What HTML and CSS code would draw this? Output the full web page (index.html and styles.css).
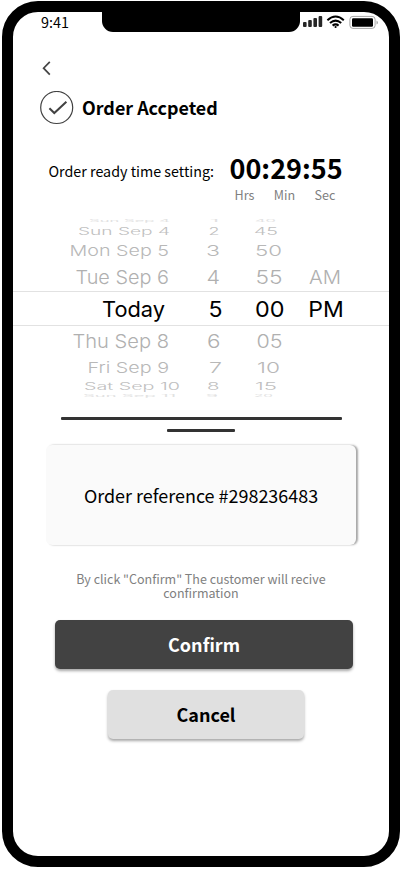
FILE: index.html
```html
<!DOCTYPE html>
<html lang="en">
<head>
<meta charset="utf-8">
<title>Order accepted</title>
<link rel="stylesheet" href="styles.css">
</head>
<body>
<main class="phone">
  <div class="notch"></div>
  <header class="status">
    <span class="clock">9:41</span>
    <svg class="indicators" width="78" height="16" viewBox="302 14 78 16">
      <g fill="#262626">
        <rect x="303" y="22" width="3.6" height="5" rx="1"/>
        <rect x="308.2" y="20" width="3.6" height="7" rx="1"/>
        <rect x="313.4" y="18" width="3.6" height="9" rx="1"/>
        <rect x="318.6" y="16" width="3.6" height="11" rx="1"/>
      </g>
      <g fill="none" stroke="#000" stroke-width="2">
        <path d="M327.4 20.2Q335.6 12.8 343.8 20.2"/>
        <path d="M330 23.1Q335.6 18.2 341.2 23.1"/>
        <path d="M332.6 25.6Q335.6 23.2 338.6 25.6"/>
      </g>
      <circle cx="335.6" cy="27" r="1.1"/>
      <rect x="349.9" y="16.4" width="25.2" height="12" rx="3" fill="none" stroke="#a6a6a6"/>
      <rect x="352" y="18.2" width="21" height="8.6" rx="1.2"/>
      <path d="M376.5 20.4Q378 21.2 378 22.5T376.5 24.6Z" fill="#a6a6a6"/>
    </svg>
  </header>
  <svg class="back" width="12" height="16" viewBox="40 60 12 16" fill="none" stroke="#444" stroke-width="1.7"><path d="M49.8 61.8L43.6 68.2L49.8 74.6"/></svg>
  <div class="title">
    <svg width="34" height="34" viewBox="0 0 34 34" fill="none" stroke="#424242">
      <circle cx="16.7" cy="16.5" r="16" stroke-width="1.2"/>
      <path d="M9.4 17.2L14.3 22L26.4 10.7" stroke-width="2"/>
    </svg>
    <h1>Order Accpeted</h1>
  </div>
  <section class="timer">
    <p class="label">Order ready time setting:</p>
    <div class="count">
      <strong>00:29:55</strong>
      <div class="units"><span>Hrs</span><span>Min</span><span>Sec</span></div>
    </div>
  </section>
  <svg class="picker" width="376" height="180" viewBox="13 218 376 180">
    <path class="rule" d="M13 291.5H389M13 325.5H389"/>
    <g class="edge">
      <text x="89" y="222" textLength="81" lengthAdjust="spacingAndGlyphs">Sun Sep 4</text>
      <text x="210" y="222" textLength="9" lengthAdjust="spacingAndGlyphs">1</text>
      <text x="255" y="222" textLength="21" lengthAdjust="spacingAndGlyphs">40</text>
      <text x="83" y="397" textLength="93" lengthAdjust="spacingAndGlyphs">Sun Sep 11</text>
      <text x="206" y="397" textLength="12" lengthAdjust="spacingAndGlyphs">9</text>
      <text x="254" y="397" textLength="19" lengthAdjust="spacingAndGlyphs">20</text>
    </g>
    <g class="far">
      <text x="78" y="234.5" textLength="92" lengthAdjust="spacingAndGlyphs">Sun Sep 4</text>
      <text x="208.5" y="234.5" textLength="11" lengthAdjust="spacingAndGlyphs">2</text>
      <text x="254" y="234.5" textLength="24" lengthAdjust="spacingAndGlyphs">45</text>
      <text x="84" y="390.4" textLength="96" lengthAdjust="spacingAndGlyphs">Sat Sep 10</text>
      <text x="207" y="390.4" textLength="12.5" lengthAdjust="spacingAndGlyphs">8</text>
      <text x="255" y="390.4" textLength="22" lengthAdjust="spacingAndGlyphs">15</text>
    </g>
    <g class="mid">
      <text x="69.5" y="255.8" textLength="99.5" lengthAdjust="spacingAndGlyphs">Mon Sep 5</text>
      <text x="206" y="255.8" textLength="14" lengthAdjust="spacingAndGlyphs">3</text>
      <text x="255" y="255.8" textLength="27" lengthAdjust="spacingAndGlyphs">50</text>
      <text x="87.5" y="373.2" textLength="81.5" lengthAdjust="spacingAndGlyphs">Fri Sep 9</text>
      <text x="209" y="373.2" textLength="13" lengthAdjust="spacingAndGlyphs">7</text>
      <text x="257" y="373.2" textLength="23" lengthAdjust="spacingAndGlyphs">10</text>
    </g>
    <g class="near">
      <text x="75.5" y="284.4" textLength="93.5" lengthAdjust="spacingAndGlyphs">Tue Sep 6</text>
      <text x="206.5" y="284.4" textLength="13.5" lengthAdjust="spacingAndGlyphs">4</text>
      <text x="255.5" y="284.4" textLength="27" lengthAdjust="spacingAndGlyphs">55</text>
      <text x="309" y="284.4" textLength="32" lengthAdjust="spacingAndGlyphs">AM</text>
      <text x="72.5" y="347.5" textLength="96.5" lengthAdjust="spacingAndGlyphs">Thu Sep 8</text>
      <text x="207" y="347.5" textLength="13.5" lengthAdjust="spacingAndGlyphs">6</text>
      <text x="256.5" y="347.5" textLength="26" lengthAdjust="spacingAndGlyphs">05</text>
    </g>
    <g class="chosen">
      <text x="102" y="317" textLength="63" lengthAdjust="spacingAndGlyphs">Today</text>
      <text x="208.5" y="317" textLength="14" lengthAdjust="spacingAndGlyphs">5</text>
      <text x="255" y="317" textLength="29.5" lengthAdjust="spacingAndGlyphs">00</text>
      <text x="308.3" y="317" textLength="35.5" lengthAdjust="spacingAndGlyphs">PM</text>
    </g>
  </svg>
  <div class="bar long"></div>
  <div class="bar short"></div>
  <section class="card">Order reference #298236483</section>
  <p class="note">By click "Confirm" The customer will recive confirmation</p>
  <button class="btn confirm">Confirm</button>
  <button class="btn cancel">Cancel</button>
</main>
</body>
</html>
```
FILE: styles.css
```css
* { box-sizing: border-box; }
body {
  margin: 0;
  padding: 1px 0 0 2px;
  width: 400px;
  height: 869px;
  overflow: hidden;
  background: #fff;
  color: #000;
  font-family: "Noto Sans CJK SC", sans-serif;
}
h1, p { margin: 0; }
svg { display: block; flex: none; }
.phone {
  position: relative;
  width: 398px;
  height: 866px;
  border: 11px solid #000;
  border-radius: 36px;
  display: flex;
  flex-direction: column;
  background: #fff;
}
.notch {
  position: absolute;
  top: -1px;
  left: 89px;
  width: 198px;
  height: 21px;
  border-radius: 0 0 11px 11px;
  background: #000;
}
.status {
  display: flex;
  justify-content: space-between;
  height: 22px;
  padding: 2px 9px 0 28px;
}
.clock { font-size: 14.4px; line-height: 16px; }
.back { margin: 26px 0 0 27px; }
.title {
  display: flex;
  align-items: flex-start;
  height: 34px;
  margin: 15px 0 0 27px;
  gap: 8px;
}
h1 { padding-top: 3px; font-size: 17.9px; line-height: 26px; font-weight: 700; }
.timer {
  display: flex;
  height: 53px;
  margin-top: 26px;
  padding-left: 35.5px;
}
.label { width: 181px; padding-top: 9px; font-size: 14.3px; line-height: 22px; white-space: nowrap; }
.count { width: 113px; }
.count strong { display: block; font-size: 27px; line-height: 34px; white-space: nowrap; }
.units {
  display: flex;
  justify-content: space-between;
  padding: 0 7px 0 5px;
  color: #808080;
  font-size: 12.6px;
  line-height: 19px;
}
.picker { margin-top: 14px; font-family: Inter, sans-serif; fill: #bababa; }
.rule { fill: none; stroke: #e2e2e2; }
.edge { font-size: 3.2px; fill: #e2e2e2; }
.far { font-size: 10px; font-weight: 300; fill: #c0c0c0; }
.mid { font-size: 15px; font-weight: 300; fill: #b8b8b8; }
.near { font-size: 19px; font-weight: 300; fill: #b0b0b0; }
.chosen { font-size: 22px; fill: #000; }
.bar { flex: none; height: 3px; border-radius: 1px; background: #333; }
.long { width: 281px; margin: 19px 0 0 47.5px; }
.short { width: 68px; margin: 9px 0 0 154px; }
.card {
  flex: none;
  display: flex;
  align-items: center;
  justify-content: center;
  width: 310px;
  height: 100px;
  margin: 13px 0 0 33px;
  border-radius: 6px;
  background: #fafafa;
  box-shadow: 2px 0 2px rgba(0, 0, 0, .35);
  font-size: 17.95px;
}
.note {
  width: 270px;
  margin: 27px 0 0 53px;
  color: #808080;
  font-size: 12.5px;
  line-height: 14px;
  text-align: center;
}
.btn {
  flex: none;
  height: 49px;
  padding: 0 0 1px;
  border: 0;
  border-radius: 5px;
  box-shadow: 0 2px 3px rgba(0, 0, 0, .35);
  font: 700 18px "Noto Sans CJK SC", sans-serif;
}
.confirm { width: 298px; margin: 20px 0 0 42px; background: #424242; color: #fff; }
.cancel { width: 196px; margin: 21px 0 0 95px; background: #e0e0e0; color: #000; }
```
